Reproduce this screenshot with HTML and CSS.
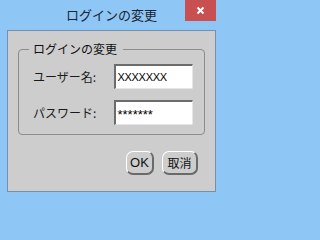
FILE: index.html
```html
<!DOCTYPE html>
<html lang="ja">
<head>
<meta charset="utf-8">
<title>ログインの変更</title>
<link rel="stylesheet" href="styles.css">
</head>
<body>
<div class="window">
  <div class="titlebar">
    <div class="spacer"></div>
    <div class="title">ログインの変更</div>
    <div class="close">
      <svg width="31" height="21" viewBox="0 0 31 21"><path d="M12.5 7.5 L18.5 13.5 M18.5 7.5 L12.5 13.5" stroke="#fff" stroke-width="2" fill="none"/></svg>
    </div>
  </div>
  <div class="client">
    <fieldset class="group">
      <legend class="legend">ログインの変更</legend>
      <div class="rows">
        <div class="row">
          <div class="label">ユーザー名:</div>
          <div class="field field-text">XXXXXXX</div>
        </div>
        <div class="row">
          <div class="label">パスワード:</div>
          <div class="field field-pass">*******</div>
        </div>
      </div>
    </fieldset>
    <div class="buttons">
      <div class="btn btn-ok">OK</div>
      <div class="btn btn-cancel">取消</div>
    </div>
  </div>
</div>
</body>
</html>
```

FILE: styles.css
```css
html, body {
  margin: 0;
  padding: 0;
}
body {
  width: 223px;
  height: 201px;
  background: #8ec6f6;
  font-family: "Noto Sans CJK JP", "Noto Sans", sans-serif;
  color: #111;
  overflow: hidden;
}
.window {
  width: 223px;
  height: 201px;
  display: flex;
  flex-direction: column;
}
.titlebar {
  height: 30px;
  display: grid;
  grid-template-columns: 1fr auto 1fr;
}
.title {
  font-size: 13px;
  line-height: 30px;
  color: #1c2430;
}
.close {
  justify-self: end;
  align-self: start;
  width: 31px;
  height: 21px;
  margin-right: 7px;
  background: #c85050;
}
.close svg {
  display: block;
}
.client {
  box-sizing: border-box;
  margin-left: 7px;
  width: 209px;
  height: 162px;
  background: #cdcdcd;
  border: 1px solid #7391ae;
  display: flex;
  flex-direction: column;
}
.group {
  margin: 11px 10px 0 10px;
  padding: 0;
  border: 1px solid #8c8c8c;
  border-radius: 4px;
  min-width: 0;
}
.legend {
  margin-left: 10px;
  padding: 0 6px 0 4px;
  font-size: 12px;
  line-height: 14px;
  color: #111;
}
.rows {
  padding: 8px 11px 9px 14px;
}
.row {
  display: flex;
  align-items: center;
  height: 25px;
}
.row + .row {
  margin-top: 11px;
}
.label {
  width: 82px;
  font-size: 12px;
  color: #1a1a1a;
}
.field {
  box-sizing: border-box;
  width: 79px;
  height: 25px;
  background: #fff;
  border-top: 2px solid #6c6c6c;
  border-left: 2px solid #6c6c6c;
  border-right: 1px solid #e6e6e6;
  border-bottom: 1px solid #e6e6e6;
  border-radius: 0 0 2px 0;
  padding-left: 1px;
  font-family: "Liberation Sans", Arial, sans-serif;
  color: #000;
  display: flex;
  align-items: center;
}
.field-text {
  font-size: 11px;
  letter-spacing: -0.3px;
}
.field-pass {
  font-size: 13px;
  padding-top: 2px;
}
.buttons {
  display: flex;
  justify-content: flex-end;
  gap: 8px;
  margin-top: 16px;
  padding-right: 17px;
}
.btn {
  box-sizing: border-box;
  height: 24px;
  border-radius: 7px;
  border-top: 1px solid #ffffff;
  border-left: 1px solid #ffffff;
  border-right: 2px solid #6a6a6a;
  border-bottom: 2px solid #6a6a6a;
  font-size: 12px;
  display: flex;
  align-items: center;
  justify-content: center;
  color: #111;
}
.btn-ok {
  width: 28px;
  font-family: "Liberation Sans", Arial, sans-serif;
  font-size: 13px;
}
.btn-cancel {
  width: 36px;
}
```
